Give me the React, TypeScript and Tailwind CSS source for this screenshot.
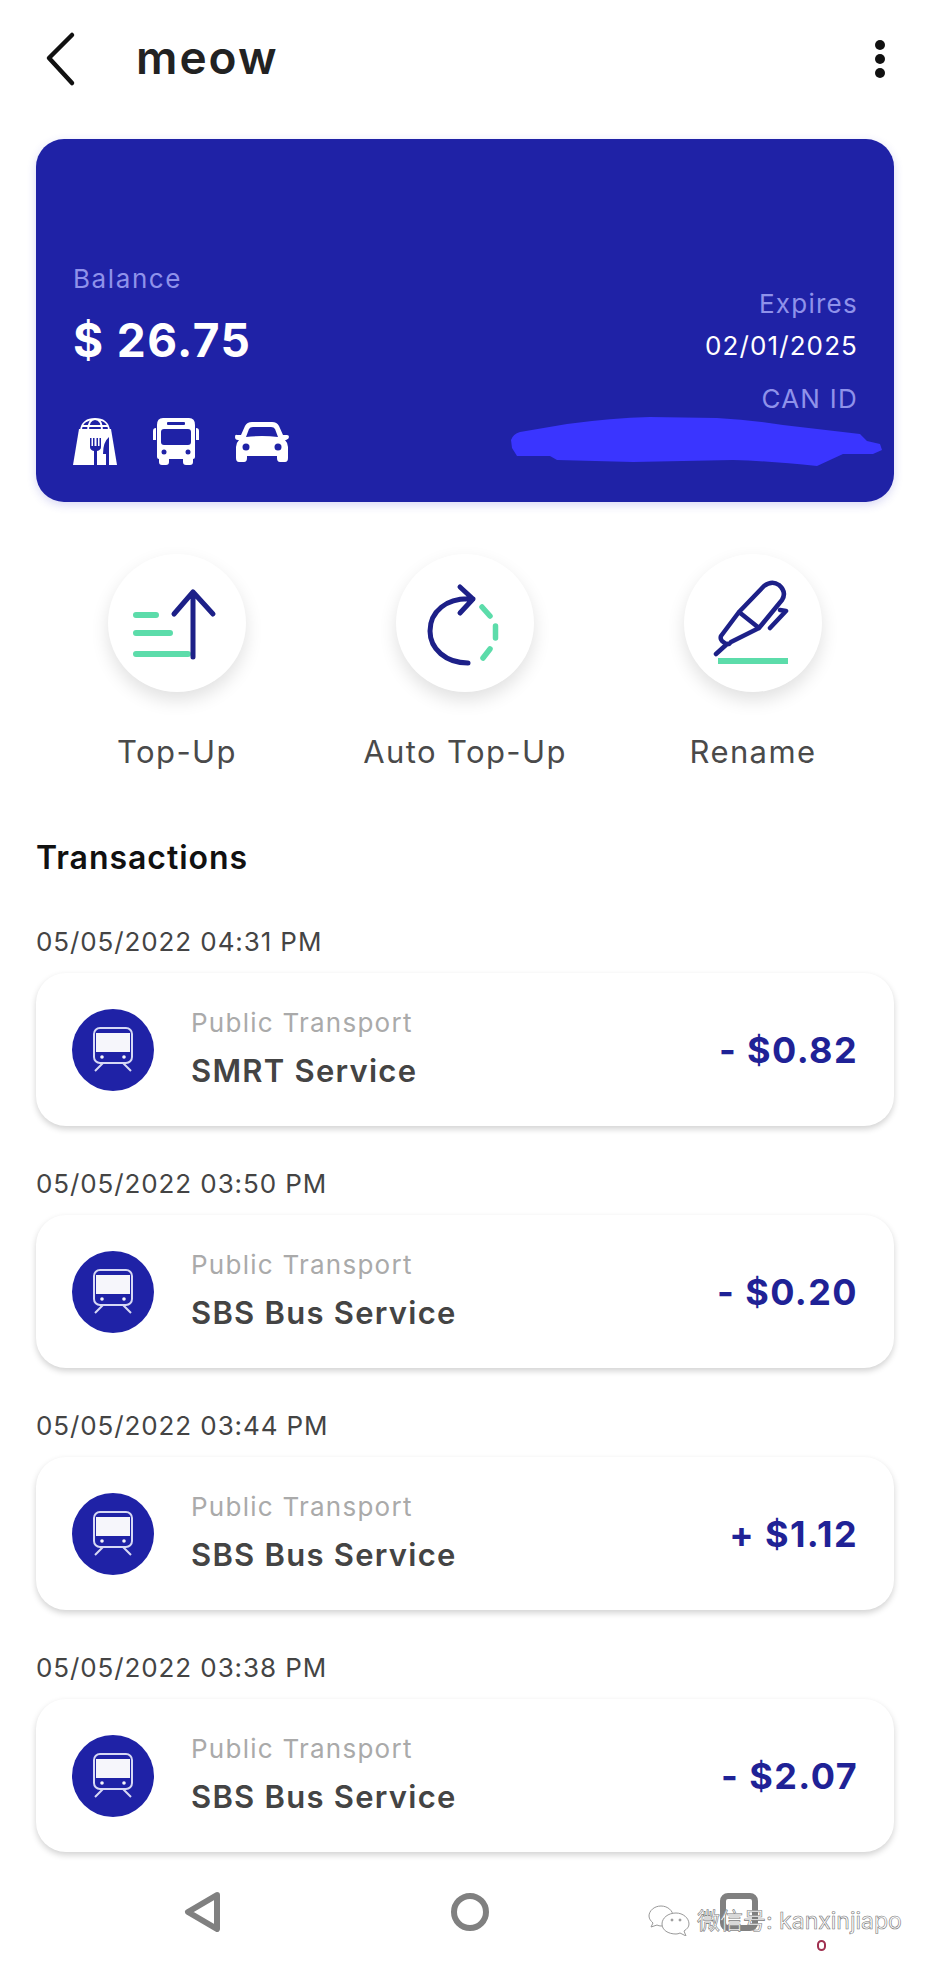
const transactions = [
  { date: "05/05/2022 04:31 PM", name: "SMRT Service", amount: "- $0.82" },
  { date: "05/05/2022 03:50 PM", name: "SBS Bus Service", amount: "- $0.20" },
  { date: "05/05/2022 03:44 PM", name: "SBS Bus Service", amount: "+ $1.12" },
  { date: "05/05/2022 03:38 PM", name: "SBS Bus Service", amount: "- $2.07" },
];

function BagIcon() {
  return (
    <svg width="44" height="47" viewBox="0 0 44 47">
      <path d="M8 13C8 4 15 1 22 1s14 3 14 12M15 13C15 5 18 1 22 1s7 4 7 12M9 8H35" fill="none" stroke="#fff" strokeWidth="1.800" />
      <path d="M6 11H38L44 47H0Z" fill="#fff" />
      <path d="M17 20V29Q17 32 21 33V47H24V33Q28 32 28 29V20H26.5V28H25V20H23.5V28H21.5V20H20V28H18.5V20Z" fill="#1f22a6" />
      <path d="M36 19Q30 24 30 36H33V47H36Z" fill="#1f22a6" />
    </svg>
  );
}

function BusIcon() {
  return (
    <svg width="46" height="47" viewBox="0 0 46 47">
      <path d="M10 0H36Q42 0 42 7V39Q42 41 40 41V44Q40 47 37 47H33Q30 47 30 44V41H16V44Q16 47 13 47H9Q6 47 6 44V41Q4 41 4 39V7Q4 0 10 0Z" fill="#fff" />
      <path d="M0 13Q0 10 3 10V22H0ZM46 13Q46 10 43 10V22H46Z" fill="#fff" />
      <rect x="14" y="4" width="18" height="3" rx="1" fill="#1f22a6" />
      <path d="M11 11H35Q38 11 38 14V24Q38 27 35 27H11Q8 27 8 24V14Q8 11 11 11Z" fill="#1f22a6" />
      <circle cx="11" cy="34" r="2.5" fill="#1f22a6" />
      <circle cx="35" cy="34" r="2.5" fill="#1f22a6" />
    </svg>
  );
}

function CarIcon() {
  return (
    <svg width="54" height="40" viewBox="0 0 54 40">
      <path d="M6 13 10 4Q12 0 17 0H37Q42 0 44 4L48 13H52Q54 13 54 15T51 18H50Q53 21 53 25V36Q53 40 50 40H45Q42 40 42 36V34H12V36Q12 40 9 40H4Q1 40 1 36V25Q1 21 4 18H3Q0 18 0 15T2 13Z" fill="#fff" />
      <path d="M11 15 14 7Q15 5 18 5H36Q39 5 40 7L43 15Q27 13 11 15Z" fill="#1f22a6" />
      <circle cx="11" cy="25" r="3.5" fill="#1f22a6" />
      <circle cx="43" cy="25" r="3.5" fill="#1f22a6" />
    </svg>
  );
}

function TopUpIcon() {
  return (
    <svg width="138" height="138" viewBox="0 0 138 138" fill="none" strokeLinecap="round" strokeLinejoin="round">
      <path d="M28 61H48M28 79H62M28 100H80" stroke="#5cdcaa" strokeWidth="6" />
      <path d="M85 103V39M66 60 85 38 105 60" stroke="#1d2088" strokeWidth="5" />
    </svg>
  );
}

function AutoTopUpIcon() {
  return (
    <svg width="138" height="138" viewBox="0 0 138 138" fill="none" strokeLinecap="round" strokeLinejoin="round">
      <path d="M77 45C50 43 34 58 34 77C34 95 50 109 72 109M64 33 77 45 64 59" stroke="#1d2088" strokeWidth="5" />
      <path d="M86 53 94 62M99.500 72V84M94 95 87 104" stroke="#5cdcaa" strokeWidth="5.500" />
    </svg>
  );
}

function RenameIcon() {
  return (
    <svg width="138" height="138" viewBox="0 0 138 138" fill="none" strokeLinecap="round" strokeLinejoin="round">
      <path d="M34 107H104" stroke="#5cdcaa" strokeWidth="6" strokeLinecap="butt" />
      <path d="M55 58 80 32Q88 26 95 31 103 38 98 46L75 74ZM55 58 37 82Q36 85 38 87L42 90Q45 91 47 88L75 74M43 90 32 100M86 74 102 57 96 56" stroke="#1d2088" strokeWidth="4.500" />
    </svg>
  );
}

function TrainIcon() {
  return (
    <svg width="44" height="48" viewBox="0 0 44 48" fill="none">
      <rect x="3" y="2" width="38" height="35" rx="6" stroke="#d7d9f5" strokeWidth="2" />
      <rect x="5" y="7" width="34" height="19" fill="#f6f6fb" />
      <circle cx="11" cy="31" r="1.800" fill="#f6f6fb" />
      <circle cx="33" cy="31" r="1.800" fill="#f6f6fb" />
      <path d="M12 37 4 45M32 37 40 45" stroke="#d7d9f5" strokeWidth="2" />
    </svg>
  );
}

function Action({ label, icon }: { label: string; icon: React.ReactNode }) {
  return (
    <div className="flex w-[290px] flex-col items-center">
      <div className="h-[138px] w-[138px] rounded-full bg-white shadow-[0_8px_18px_rgba(0,0,0,0.12)]">{icon}</div>
      <div className="mt-[42px] text-[31px] leading-[36px] tracking-[1.4px] text-[#4a4a4a]">{label}</div>
    </div>
  );
}

export default function App() {
  return (
    <div className="relative h-[1962px] w-[930px] overflow-hidden bg-white font-['Inter','Noto_Sans_CJK_SC',sans-serif]">
      {/* Header */}
      <div className="flex h-[139px] items-start px-[36px] pt-[26px]">
        <svg width="44" height="60" viewBox="0 0 44 60" fill="none" className="ml-[4px] mt-[2px]">
          <path d="M32 7 9 30 32 55" stroke="#111" strokeWidth="4.500" strokeLinecap="round" strokeLinejoin="round" />
        </svg>
        <div className="ml-[52px] mt-[1px] text-[46px] font-semibold leading-[60px] tracking-[2px] text-[#222]">meow</div>
        <div className="ml-auto mr-[9px] mt-[14px] flex flex-col gap-[4px]">
          <div className="h-[10px] w-[10px] rounded-full bg-[#111]" />
          <div className="h-[10px] w-[10px] rounded-full bg-[#111]" />
          <div className="h-[10px] w-[10px] rounded-full bg-[#111]" />
        </div>
      </div>

      {/* Balance card */}
      <div className="relative mx-[36px] flex h-[363px] items-end justify-between rounded-[28px] bg-[#1f22a6] px-[37px] pb-[37px] shadow-[0_3px_10px_rgba(60,60,200,0.2)]">
        <div>
          <div className="text-[26px] leading-[32px] tracking-[1.6px] text-[#8f92ea]">Balance</div>
          <div className="mt-[17px] text-[46px] font-bold leading-[56px] tracking-[1.4px] text-white">$ 26.75</div>
          <div className="mt-[50px] flex items-center gap-[36px]">
            <BagIcon />
            <BusIcon />
            <CarIcon />
          </div>
        </div>
        <div className="-mr-[1px] pb-[50px] text-right">
          <div className="text-[26px] leading-[32px] tracking-[1.25px] text-[#8f92ea]">Expires</div>
          <div className="mt-[10px] text-[26px] leading-[32px] tracking-[1.1px] text-white">02/01/2025</div>
          <div className="mt-[21px] text-[26px] leading-[32px] tracking-[1.25px] text-[#8f92ea]">CAN ID</div>
        </div>
        {/* Scribbled out ID */}
        <svg width="371" height="49" viewBox="0 0 371 49" className="absolute bottom-[36px] right-[12px]">
          <path d="M0 23Q2 17 9 15L56 7Q100 1 139 0L206 1Q240 3 272 8L349 17 356 24 369 27 371 33 362 37H332L306 49Q260 44 222 43L122 45 46 43 39 39H6L1 31Z" fill="#3a35ff" />
        </svg>
      </div>

      {/* Actions */}
      <div className="mt-[52px] flex px-[33px]">
        <Action label="Top-Up" icon={<TopUpIcon />} />
        <Action label="Auto Top-Up" icon={<AutoTopUpIcon />} />
        <Action label="Rename" icon={<RenameIcon />} />
      </div>

      {/* Transactions */}
      <div className="mt-[68px] px-[36px]">
        <div className="text-[32px] font-semibold leading-[40px] tracking-[0.95px] text-[#111]">Transactions</div>
        <div className="mt-[48px] flex flex-col gap-[42px]">
          {transactions.map((t, i) => (
            <div key={i}>
              <div className="text-[26px] leading-[32px] tracking-[0.9px] text-[#444]">{t.date}</div>
              <div className="mt-[15px] flex h-[153px] items-center rounded-[30px] bg-white pl-[36px] pr-[36px] shadow-[0_3px_6px_rgba(0,0,0,0.18)]">
                <div className="flex h-[82px] w-[82px] items-center justify-center rounded-full bg-[#1f22a6]">
                  <TrainIcon />
                </div>
                <div className="ml-[37px] pb-[3px]">
                  <div className="text-[26px] leading-[32px] tracking-[1.25px] text-[#aaaaaa]">Public Transport</div>
                  <div className="mt-[13px] text-[31px] font-semibold leading-[38px] tracking-[1.25px] text-[#444]">{t.name}</div>
                </div>
                <div className="ml-auto text-[36px] font-bold tracking-[1.4px] text-[#1f2296]">{t.amount}</div>
              </div>
            </div>
          ))}
        </div>
      </div>

      {/* Android nav bar */}
      <div className="absolute bottom-[15px] left-0 flex h-[70px] w-full items-center">
        <svg width="38" height="40" viewBox="0 0 38 40" fill="none" className="ml-[184px]">
          <path d="M33 3 4 20 33 37Z" stroke="#808080" strokeWidth="6" strokeLinejoin="round" />
        </svg>
        <div className="ml-[229px] h-[38px] w-[38px] rounded-full border-[6px] border-[#808080]" />
        <div className="ml-[231px] h-[38px] w-[38px] rounded-[8px] border-[6px] border-[#808080]" />
      </div>

      {/* Watermark */}
      <svg width="42" height="31" viewBox="0 0 42 31" fill="#fff" stroke="#999" strokeWidth="1" className="absolute left-[648px] top-[1905px]">
        <path d="M13 1C6 1 1 6 1 11C1 14 3 16 5 18L3 22 9 20Q11 21 13 21C20 21 25 16 25 11S20 1 13 1Z" />
        <path d="M28 8C20 8 14 13 14 19S20 29 28 29Q30 29 32 28L38 31 36 26C39 24 41 22 41 19C41 13 35 8 28 8Z" />
        <circle cx="24" cy="15" r="1" fill="#999" />
        <circle cx="32" cy="15" r="1" fill="#999" />
      </svg>
      <div className="absolute left-[697px] top-[1906px] text-[23px] leading-[30px] text-white [-webkit-text-stroke:0.6px_#777]">
        微信号: kanxinjiapo
      </div>
      <div className="absolute left-[817px] top-[1940px] h-[11px] w-[9px] rounded-full border-2 border-[#a03050] bg-white" />
    </div>
  );
}
